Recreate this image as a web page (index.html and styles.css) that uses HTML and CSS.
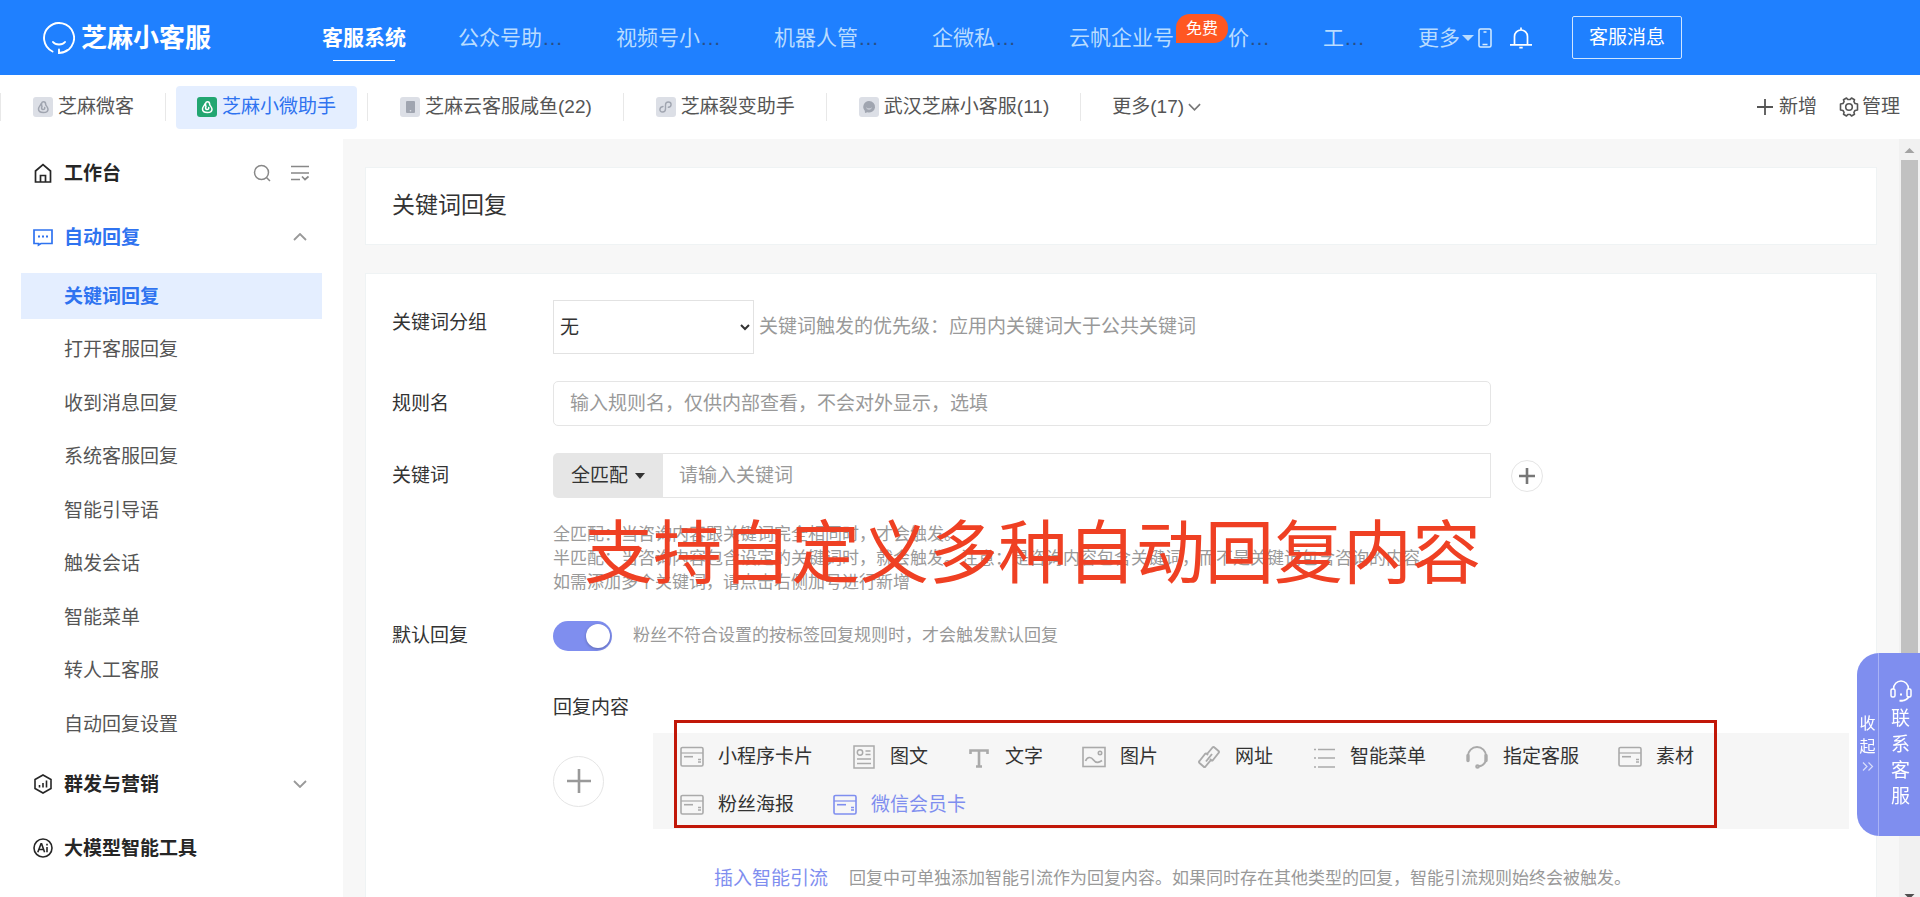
FILE: index.html
```html
<!DOCTYPE html>
<html lang="zh-CN">
<head>
<meta charset="utf-8">
<title>芝麻小客服 - 关键词回复</title>
<link rel="stylesheet" href="styles.css">
</head>
<body>
<svg width="0" height="0" class="defs" aria-hidden="true">
  <symbol id="i-card" viewBox="0 0 24 24"><path d="M2.500 2.500h19a1.500 1.500 0 0 1 1.500 1.500v15.500a1.500 1.500 0 0 1-1.500 1.500h-19A1.500 1.500 0 0 1 1 19.500V4a1.500 1.500 0 0 1 1.500-1.500z" fill="none" stroke="currentColor" stroke-width="1.600"/><path d="M1 8h22" stroke="currentColor" stroke-width="2" opacity=".6"/><path d="M4 11.700h9" stroke="currentColor" stroke-width="1.600"/><path d="M18 14.500h3M18 17h3" stroke="currentColor" stroke-width="1.300"/></symbol>
  <symbol id="i-mini" viewBox="0 0 20 20"><path d="M9 9.500C8 7 8.500 4.800 10.500 4.800c1.500 0 2.200 1.200 2.200 2.700 0 1.200 2.300 2.500 2.300 4.700 0 2-1.800 3.300-4.600 3.300S5.500 14.200 5.500 12c0-2.500 2-3 2.300-5M9 9.500c-.8 1.300-.5 3 1 3 1.300 0 2-.8 1.700-2" fill="none" stroke="currentColor" stroke-width="1.500" stroke-linecap="round"/></symbol>
  <symbol id="i-down" viewBox="0 0 14 8"><path d="M1 1l6 6 6-6" fill="none" stroke="currentColor" stroke-width="1.800"/></symbol>
</svg>

<header class="topbar">
  <a class="logo" href="#">
    <svg width="32" height="32" viewBox="0 0 32 32" fill="none" stroke="currentColor" stroke-width="1.900" stroke-linecap="round"><path d="M9.500 29.500A15 15 0 1 1 16 31v-3.500M16 31c3.500 0 6-1 8.500-3M10 20c2.500 3.300 9.500 3.300 12 0"/></svg>
    <span>芝麻小客服</span>
  </a>
  <nav class="nav">
    <a class="on" href="#">客服系统</a>
    <a href="#">公众号助<i>…</i></a>
    <a href="#">视频号小<i>…</i></a>
    <a href="#">机器人管<i>…</i></a>
    <a href="#">企微私<i>…</i></a>
    <a href="#">云帆企业号<b class="free">免费</b>价<i>…</i></a>
    <a href="#">工<i>…</i></a>
    <a href="#">更多<svg class="caret" width="12" height="6" viewBox="0 0 12 6"><path d="M0 0h12L6 6z" fill="currentColor"/></svg></a>
  </nav>
  <svg class="phone" width="14" height="20" viewBox="0 0 14 20" fill="none" stroke="currentColor" stroke-width="1.500"><rect x="1" y="1" width="12" height="18" rx="1.500"/><path d="M5.500 4h3M4.500 16.500h5"/></svg>
  <svg class="bell" width="22" height="22" viewBox="0 0 22 22" fill="none" stroke="currentColor" stroke-width="1.700"><path d="M4.500 17.500V9.500a6.500 6.500 0 0 1 13 0v8M0 17.800h22M11 .5V3M9.300 20.700h3.400"/></svg>
  <button class="msg">客服消息</button>
</header>

<div class="apps">
  <nav class="tabs">
    <a href="#"><span class="ic"><svg width="20" height="20"><use href="#i-mini"/></svg></span>芝麻微客</a>
    <a class="on" href="#"><span class="ic"><svg width="20" height="20"><use href="#i-mini"/></svg></span>芝麻小微助手</a>
    <a href="#"><span class="ic"><svg width="20" height="20" viewBox="0 0 20 20"><rect x="6" y="4" width="9" height="12" rx="1" fill="currentColor"/><circle cx="10.500" cy="13.800" r=".8" fill="#dcdfe6"/></svg></span>芝麻云客服咸鱼(22)</a>
    <a href="#"><span class="ic"><svg width="20" height="20" viewBox="0 0 20 20" fill="none" stroke="currentColor" stroke-width="1.400" stroke-linecap="round"><path d="M7 9.500c-4 .5-4 5.500-.5 5.500 2 0 3-1.200 3-3V8c0-2 1.200-3 2.800-3 3.700 0 3.700 5 0 5.300"/></svg></span>芝麻裂变助手</a>
    <a href="#"><span class="ic"><svg width="20" height="20" viewBox="0 0 20 20"><path d="M10 4a6 5.700 0 1 1-1.500 11.200L6 16l-.2-2.300A5.800 5.800 0 0 1 10 4z" fill="currentColor"/><path d="M7.500 11c1 1.400 4 1.400 5 0" fill="none" stroke="#dcdfe6"/></svg></span>武汉芝麻小客服(11)</a>
    <a href="#">更多(17)<svg class="more" width="13" height="8"><use href="#i-down"/></svg></a>
  </nav>
  <div class="tools">
    <button><svg width="16" height="16" viewBox="0 0 16 16" stroke="currentColor" stroke-width="1.800"><path d="M0 8h16M8 0v16"/></svg>新增</button>
    <button class="gear"><svg width="20" height="20" viewBox="0 0 20 20" fill="none" stroke="currentColor" stroke-width="1.600" stroke-linejoin="round"><path d="M7.500 1l1.300 1.500h2.400L12.500 1l3 1.700-.6 2L16 6.500l2.500.5v6l-2.500.5-1.100 1.800.6 2-3 1.700-1.300-1.500H8.800L7.500 19l-3-1.700.6-2L4 13.500 1.500 13V7L4 6.500l1.100-1.800-.6-2z"/><circle cx="10" cy="10" r="3.300"/></svg>管理</button>
  </div>
</div>

<div class="body">
  <aside class="side">
    <div class="group">
      <svg width="20" height="20" viewBox="0 0 20 20" fill="none" stroke="currentColor" stroke-width="1.700"><path d="M2.500 8L10 1.500 17.500 8v11h-15zM7.500 19v-6.500h5V19"/></svg>
      <a href="#">工作台</a>
      <button class="search" aria-label="搜索"><svg width="18" height="18" viewBox="0 0 18 18" fill="none" stroke="currentColor" stroke-width="1.500"><circle cx="8.500" cy="8.500" r="7"/><path d="M13.500 13.500L17 17"/></svg></button>
      <button aria-label="收起菜单"><svg width="18" height="16" viewBox="0 0 18 16" fill="none" stroke="currentColor" stroke-width="1.700"><path d="M0 1.500h18M0 8h18M0 14.500h9M11 11.500l3 3 3.500-3"/></svg></button>
    </div>
    <div class="group on">
      <svg width="20" height="20" viewBox="0 0 20 20" fill="none" stroke="currentColor" stroke-width="1.700"><path d="M1 3h18v13.500H8L5.500 18v-1.500H1z"/><path d="M5 9.500h2M9 9.500h2M13 9.500h2" stroke-width="2"/></svg>
      <a href="#">自动回复</a>
      <svg class="arrow up" width="14" height="8"><use href="#i-down"/></svg>
    </div>
    <ul class="sub">
      <li><a class="on" href="#">关键词回复</a></li>
      <li><a href="#">打开客服回复</a></li>
      <li><a href="#">收到消息回复</a></li>
      <li><a href="#">系统客服回复</a></li>
      <li><a href="#">智能引导语</a></li>
      <li><a href="#">触发会话</a></li>
      <li><a href="#">智能菜单</a></li>
      <li><a href="#">转人工客服</a></li>
      <li><a href="#">自动回复设置</a></li>
    </ul>
    <div class="group">
      <svg width="20" height="20" viewBox="0 0 20 20" fill="none" stroke="currentColor" stroke-width="1.600"><path d="M10 1l8 4.500v9L10 19l-8-4.500v-9z"/><path d="M6.500 11v2.500M10 9v4.500M13.500 6.500v7"/></svg>
      <a href="#">群发与营销</a>
      <svg class="arrow" width="14" height="8"><use href="#i-down"/></svg>
    </div>
    <div class="group">
      <svg width="20" height="20" viewBox="0 0 20 20" fill="none" stroke="currentColor" stroke-width="1.600"><circle cx="10" cy="10" r="9"/><path d="M4.800 14.300L8 5.700h.6l3 8.600M6 11.500h4.500M14 9v5.300M14 5.800v1.700"/></svg>
      <a href="#">大模型智能工具</a>
    </div>
  </aside>

  <main class="main">
    <h1 class="card title">关键词回复</h1>
    <section class="card form">
      <div class="row">
        <label class="lab high" for="grp">关键词分组</label>
        <select id="grp"><option>无</option></select>
        <span class="tip">关键词触发的优先级：应用内关键词大于公共关键词</span>
      </div>
      <div class="row">
        <label class="lab" for="rule">规则名</label>
        <input class="text" id="rule" type="text" placeholder="输入规则名，仅供内部查看，不会对外显示，选填">
      </div>
      <div class="row kw">
        <label class="lab" for="kw">关键词</label>
        <div class="combo">
          <button class="match">全匹配<svg width="10" height="6" viewBox="0 0 10 6"><path d="M0 0h10L5 6z" fill="currentColor"/></svg></button>
          <input id="kw" type="text" placeholder="请输入关键词">
        </div>
        <button class="plus small" aria-label="添加关键词"><svg width="16" height="16" viewBox="0 0 16 16" stroke="currentColor" stroke-width="2.600"><path d="M0 8h16M8 0v16"/></svg></button>
      </div>
      <p class="help">全匹配：当咨询内容跟关键词完全相同时，才会触发。<br>半匹配：当咨询内容包含设定的关键词时，就会触发。注意：是咨询内容包含关键词，而不是关键词包含咨询的内容。<br>如需添加多个关键词，请点击右侧加号进行新增</p>
      <div class="row def">
        <label class="lab" for="def">默认回复</label>
        <input class="switch" id="def" type="checkbox" checked>
        <span class="note">粉丝不符合设置的按标签回复规则时，才会触发默认回复</span>
      </div>
      <div class="reply">
        <h2>回复内容</h2>
        <div class="picker">
          <button class="plus" aria-label="添加回复内容"><svg width="24" height="24" viewBox="0 0 24 24" stroke="currentColor" stroke-width="2.600"><path d="M0 12h24M12 0v24"/></svg></button>
          <div class="panel">
            <button><svg width="24" height="24"><use href="#i-card"/></svg>小程序卡片</button>
            <button><svg width="24" height="24" viewBox="0 0 24 24" fill="none" stroke="currentColor" stroke-width="1.500"><rect x="2" y="1" width="20" height="22"/><circle cx="8" cy="7.500" r="2.700"/><path d="M13.500 6h5M13.500 9.500h5M5 14h14M5 18.500h14"/></svg>图文</button>
            <button><svg width="24" height="24" viewBox="0 0 24 24" fill="none" stroke="currentColor" stroke-width="2.600"><path d="M3.500 9V5.500h17V9M12 5.500v16M9 21.500h6"/></svg>文字</button>
            <button><svg width="24" height="24" viewBox="0 0 24 24" fill="none" stroke="currentColor" stroke-width="1.600"><rect x="1" y="2.500" width="22" height="19"/><path d="M3.500 16c2-4.500 5.500-4.500 8-1s5 3 8.500.5" stroke-width="1.700"/><circle cx="18" cy="8" r="1.700"/></svg>图片</button>
            <button><svg width="24" height="24" viewBox="0 0 24 24" fill="none" stroke="currentColor" stroke-width="1.900" stroke-linejoin="round"><path d="M10.500 8.500L15.500 2.500q1-1 2 0l4 3.500q1 1 0 2l-5.500 7q-1 1-2 0l-1-1M13.500 15.500l-5 6q-1 1-2 0l-4-3.500q-1-1 0-2l5.500-7q1-1 2 0l1 1M9 16.500l6-7.500"/></svg>网址</button>
            <button><svg width="24" height="24" viewBox="0 0 24 24" fill="none" stroke="currentColor" stroke-width="1.500"><path d="M2 4.500h2M6 4.500h17M2 13h2M6 13h17M2 22h2M6 22h17"/></svg>智能菜单</button>
            <button><svg width="24" height="24" viewBox="0 0 24 24" fill="none" stroke="currentColor" stroke-width="2"><path d="M3 11a9 9 0 0 1 18 0M21 15c-1 4-3.500 6-8 6.500"/><path d="M3 10.500v5M21 10.500v5" stroke-width="3.400" stroke-linecap="round"/><circle cx="12.500" cy="21.500" r="1.300"/></svg>指定客服</button>
            <button><svg width="24" height="24"><use href="#i-card"/></svg>素材</button>
            <button><svg width="24" height="24"><use href="#i-card"/></svg>粉丝海报</button>
            <button class="on"><svg width="24" height="24"><use href="#i-card"/></svg>微信会员卡</button>
            <div class="frame"></div>
          </div>
        </div>
        <div class="insert"><a href="#">插入智能引流</a><span>回复中可单独添加智能引流作为回复内容。如果同时存在其他类型的回复，智能引流规则始终会被触发。</span></div>
      </div>
      <div class="caption">支持自定义多种自动回复内容</div>
    </section>
  </main>

  <div class="scroll">
    <svg width="21" height="21" viewBox="0 0 21 21"><path d="M5.500 14L10.500 9l5 5z" fill="#a3a3a3"/></svg>
    <div class="track"><div class="thumb"></div></div>
    <svg width="21" height="6" viewBox="0 0 21 6"><path d="M5.500 3h10l-5 5z" fill="#505050"/></svg>
  </div>
</div>

<div class="contact">
  <button class="fold"><span>收起</span><svg width="12" height="9" viewBox="0 0 12 9" fill="none" stroke="currentColor" stroke-width="1.200"><path d="M1 .5l4 4-4 4M6.500.5l4 4-4 4"/></svg></button>
  <button class="talk"><svg width="22" height="22" viewBox="0 0 22 22" fill="none" stroke="currentColor" stroke-width="1.500"><path d="M3.500 9a7.500 8 0 0 1 15 0M19 16.500c-1.500 2.500-3.500 4-7 4.200"/><rect x="1" y="9" width="4" height="8" rx="1.500"/><rect x="17" y="9" width="4" height="8" rx="1.500"/><path d="M10 14.500h2M9.500 20.700h3" stroke-width="2"/></svg><span>联系客服</span></button>
</div>
</body>
</html>
```
FILE: styles.css
```css
* { box-sizing: border-box; }
html, body { height: 100%; }
body {
  margin: 0;
  display: flex;
  flex-direction: column;
  overflow: hidden;
  background: #fff;
  color: #333;
  font: 19px/28px "Liberation Sans", "Noto Sans CJK SC", sans-serif;
}
a { color: inherit; text-decoration: none; }
button, input, select { font: inherit; color: inherit; }
button { padding: 0; border: 0; background: none; cursor: pointer; }
svg { display: block; flex: none; }
h1, h2, p, ul { margin: 0; padding: 0; font-weight: normal; }
.defs { position: absolute; }

/* top bar */
.topbar {
  display: flex;
  align-items: center;
  flex: none;
  height: 75px;
  padding-left: 43px;
  background: #1f80ff;
  color: #fff;
  white-space: nowrap;
}
.logo { display: flex; align-items: center; gap: 6px; font-size: 26px; font-weight: bold; }
.nav { display: flex; gap: 53px; margin-left: 111px; font-size: 21px; }
.nav a { display: flex; align-items: center; height: 47px; color: #b9dcff; }
.nav a.on { position: relative; margin-right: -1px; color: #fff; font-weight: bold; }
.nav a.on::after {
  content: "";
  position: absolute;
  left: 11px;
  right: 11px;
  bottom: 0;
  height: 1px;
  background: #fff;
}
.nav i { font-style: normal; color: #2a4f86; }
.free {
  align-self: flex-start;
  margin-left: 2px;
  padding: 1px 10px 0;
  border-radius: 14px 14px 14px 0;
  background: #ff5722;
  color: #fff;
  font-size: 16px;
  font-weight: normal;
}
.caret { margin-left: 2px; }
.phone { margin-left: 4px; color: #d6ebff; }
.bell { margin-left: 18px; }
.msg {
  margin-left: 40px;
  width: 110px;
  height: 43px;
  border: 1px solid #cfe5ff;
  border-radius: 2px;
}

/* application tabs */
.apps {
  display: flex;
  justify-content: space-between;
  align-items: center;
  flex: none;
  height: 64px;
  padding-right: 20px;
  color: #555;
  white-space: nowrap;
}
.tabs { display: flex; align-items: center; }
.tabs a {
  display: flex;
  align-items: center;
  height: 28px;
  padding: 0 31px 0 32px;
  border-left: 1px solid #e8e8e8;
}
.tabs a:first-child { border-right: 1px solid #e8e8e8; }
.tabs a:last-child { padding-left: 31px; }
.tabs a.on {
  height: 43px;
  margin: 0 10px;
  padding: 0 21px;
  border: 0;
  border-radius: 4px;
  background: #e4eeff;
  color: #2f73f0;
}
.ic { margin-right: 5px; border-radius: 3px; background: #dcdfe6; color: #a0a5b0; }
.on .ic { background: #22a671; color: #fff; }
.more { margin-left: 4px; color: #777; }
.tools { display: flex; gap: 22px; }
.tools button { display: flex; align-items: center; gap: 6px; }
.tools .gear { gap: 3px; }

/* page body */
.body { display: flex; flex: 1; min-height: 0; background: #f7f7f7; }
.side { flex: none; width: 343px; padding-top: 2px; overflow: hidden; background: #fff; color: #262626; }
.group {
  display: flex;
  align-items: center;
  height: 64px;
  padding: 0 34px 0 33px;
  font-weight: bold;
}
.group a { flex: 1; margin-left: 11px; padding-top: 2px; }
.group.on { color: #2f73f0; }
.group button { color: #888; }
.search { margin-right: 20px; }
.arrow { margin-right: 2px; color: #999; }
.up { transform: rotate(180deg); }
.sub { margin: 4px 21px 5px; list-style: none; color: #555; }
.sub a { display: block; padding: 2px 0 0 43px; line-height: 44px; }
.sub a.on { background: #e4eeff; color: #2f73f0; font-weight: bold; }
.sub li:nth-child(even) { margin: 7px 0 8px; }

.main { display: flex; flex-direction: column; flex: 1; min-width: 0; padding: 28px 22px 0; }
.card { border: 1px solid #eff3f4; background: #fff; }
.title { flex: none; padding: 23px 26px 25px; font-size: 23px; }
.form {
  position: relative;
  flex: 1;
  min-height: 0;
  margin-top: 28px;
  padding: 26px 27px 0 26px;
  overflow: hidden;
  border-bottom: 0;
  white-space: nowrap;
}
.row { display: flex; align-items: center; margin-bottom: 27px; }
.lab { flex: none; width: 161px; }
.high { padding-bottom: 8px; }
select {
  width: 201px;
  height: 54px;
  padding: 0 4px 0 2px;
  border: 1px solid #e2e2e2;
  border-radius: 0;
  background: #fff;
}
.tip { margin-left: 5px; color: #999; }
::placeholder { color: #999; opacity: 1; }
.text {
  width: 100%;
  max-width: 938px;
  height: 45px;
  padding: 0 16px;
  border: 1px solid #e5e5e5;
  border-radius: 5px;
}
.kw { margin-bottom: 25px; }
.combo { display: flex; width: 100%; max-width: 938px; height: 45px; }
.match {
  display: flex;
  align-items: center;
  justify-content: center;
  gap: 7px;
  width: 110px;
  border-radius: 5px 0 0 5px;
  background: #e6e6e6;
}
.combo input { flex: 1; min-width: 0; padding: 0 16px; border: 1px solid #e5e5e5; border-left: 0; }
.plus {
  display: grid;
  place-items: center;
  flex: none;
  width: 51px;
  height: 51px;
  border: 1px solid #e5e5e5;
  border-radius: 50%;
  color: #999;
}
.plus.small { width: 32px; height: 32px; margin-left: 20px; color: #777; }
.help { margin-left: 161px; color: #999; font-size: 17px; line-height: 24px; }
.def { margin: 26px 0 0; height: 30px; }
.switch {
  appearance: none;
  flex: none;
  width: 59px;
  height: 30px;
  margin: 0;
  padding: 3px 2px;
  border-radius: 15px;
  background: #7f8eef;
}
.switch::before {
  content: "";
  display: block;
  width: 24px;
  height: 24px;
  margin-left: 31px;
  border-radius: 50%;
  background: #fff;
  box-shadow: 0 1px 3px #0004;
}
.note { margin-left: 21px; color: #999; font-size: 17px; }
.reply { margin: 43px 0 0 161px; }
.reply h2 { font-size: 19px; }
.picker { display: flex; align-items: center; gap: 49px; margin-top: 11px; }
.panel {
  position: relative;
  flex: 1;
  display: flex;
  flex-wrap: wrap;
  column-gap: 39px;
  padding: 0 27px;
  background: #f6f6f6;
}
.panel button { display: flex; align-items: center; gap: 14px; height: 48px; }
.panel svg { color: #aaa; }
.panel .on, .panel .on svg { color: #7f8eef; }
.frame {
  position: absolute;
  inset: -13px 132px 1px 21px;
  border: 3px solid #c11708;
  pointer-events: none;
}
.insert { display: flex; gap: 21px; margin: 36px 0 0 161px; }
.insert a { color: #7f8eef; }
.insert span { color: #999; font-size: 17px; }
.caption {
  position: absolute;
  top: 246px;
  left: 218px;
  color: #ef4023;
  font-size: 69px;
  line-height: 70px;
}

/* scroll rail */
.scroll { display: flex; flex-direction: column; width: 21px; background: #f1f1f1; }
.track { flex: 1; padding: 0 2px; }
.thumb { height: 75%; background: #c1c1c1; }

/* contact widget */
.contact {
  position: fixed;
  right: 0;
  bottom: 61px;
  display: flex;
  height: 183px;
  border-radius: 22px 0 0 22px;
  background: #7f8eef;
  color: #fff;
}
.contact button { display: flex; flex-direction: column; align-items: center; justify-content: center; }
.fold { width: 22px; gap: 4px; padding-bottom: 6px; border-right: 1px solid #a9b3f5; font-size: 16px; line-height: 23px; }
.fold span { width: 16px; white-space: normal; }
.fold svg { opacity: .7; }
.talk { width: 41px; gap: 4px; padding-left: 2px; line-height: 26px; }
.talk span { width: 19px; white-space: normal; }
```
